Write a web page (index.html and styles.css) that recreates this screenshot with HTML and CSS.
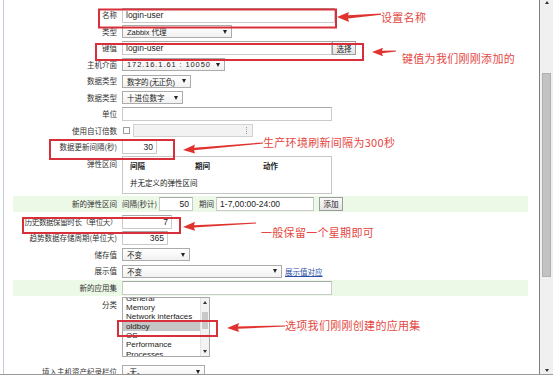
FILE: index.html
```html
<!DOCTYPE html>
<html lang="zh-CN">
<head>
    <meta charset="UTF-8">
    <title>监控项</title>
    <link rel="stylesheet" href="styles.css">
</head>
<body>
<div class="page">
    <div class="content">
        <div class="topbar"></div>
        <div class="form">
            <div class="row">
                <div class="label">名称</div>
                <div class="field"><div class="input w213 tall">login-user</div></div>
            </div>
            <div class="row">
                <div class="label">类型</div>
                <div class="field"><div class="select w110"><span>Zabbix 代理</span><i class="caret"></i></div></div>
            </div>
            <div class="row">
                <div class="label">键值</div>
                <div class="field"><div class="input w210">login-user</div><div class="btn">选择</div></div>
            </div>
            <div class="row">
                <div class="label">主机介面</div>
                <div class="field"><div class="select w103 spaced"><span>172.16.1.61 : 10050</span><i class="caret"></i></div></div>
            </div>
            <div class="row">
                <div class="label">数据类型</div>
                <div class="field"><div class="select w69 tight"><span>数字的 (无正负)</span><i class="caret"></i></div></div>
            </div>
            <div class="row">
                <div class="label">数据类型</div>
                <div class="field"><div class="select w61"><span>十进位数字</span><i class="caret"></i></div></div>
            </div>
            <div class="row">
                <div class="label">单位</div>
                <div class="field"><div class="input w210"></div></div>
            </div>
            <div class="row">
                <div class="label">使用自订倍数</div>
                <div class="field"><div class="checkbox"></div><div class="spinner"><i></i></div></div>
            </div>
            <div class="row">
                <div class="label">数据更新间隔(秒)</div>
                <div class="field"><div class="input num w35">30</div></div>
            </div>
            <div class="row tall-row">
                <div class="label">弹性区间</div>
                <div class="field">
                    <div class="intervals">
                        <div class="intervals-head"><span>间隔</span><span>期间</span><span>动作</span></div>
                        <div class="intervals-empty">并无定义的弹性区间</div>
                    </div>
                </div>
            </div>
            <div class="row band">
                <div class="label">新的弹性区间</div>
                <div class="field">
                    <span class="inline-text">间隔(秒计)</span>
                    <div class="input num w34 ml2">50</div>
                    <span class="inline-text ml6">期间</span>
                    <div class="input w98 ml2">1-7,00:00-24:00</div>
                    <div class="btn ml5">添加</div>
                </div>
            </div>
            <div class="row mt2">
                <div class="label narrow">历史数据保留时长（单位天）</div>
                <div class="field"><div class="input num w50">7</div></div>
            </div>
            <div class="row">
                <div class="label">趋势数据存储周期(单位天)</div>
                <div class="field"><div class="input num w46">365</div></div>
            </div>
            <div class="row">
                <div class="label">储存值</div>
                <div class="field"><div class="select w68"><span>不变</span><i class="caret"></i></div></div>
            </div>
            <div class="row">
                <div class="label">展示值</div>
                <div class="field"><div class="select w160"><span>不变</span><i class="caret"></i></div><a class="link" href="#">展示值对应</a></div>
            </div>
            <div class="row band">
                <div class="label">新的应用集</div>
                <div class="field"><div class="input w210"></div></div>
            </div>
            <div class="row list-row">
                <div class="label">分类</div>
                <div class="field">
                    <div class="listbox">
                        <div class="options">
                            <div class="option">General</div>
                            <div class="option">Memory</div>
                            <div class="option">Network interfaces</div>
                            <div class="option selected">oldboy</div>
                            <div class="option">OS</div>
                            <div class="option">Performance</div>
                            <div class="option">Processes</div>
                        </div>
                        <div class="list-scroll">
                            <i class="tri up"></i>
                            <div class="list-thumb"></div>
                            <i class="tri down"></i>
                        </div>
                    </div>
                </div>
            </div>
            <div class="row last-row">
                <div class="label">填入主机资产纪录栏位</div>
                <div class="field"><div class="select w83"><span>-无-</span><i class="caret"></i></div></div>
            </div>
        </div>

        <!-- annotations drawn on top of the screenshot -->
        <svg class="marks" width="539" height="374" viewBox="0 0 539 374">
            <g fill="none" stroke="#d8303a" stroke-width="2">
                <rect x="99" y="9.5" width="237" height="18"/>
                <rect x="96" y="44" width="267" height="16"/>
                <rect x="50" y="140" width="124" height="19"/>
                <rect x="23" y="218" width="157" height="15"/>
                <rect x="118" y="321" width="99" height="15"/>
            </g>
            <g fill="#e0332f">
                <polygon points="337,17 349,12 348,15.3 381,13.4 381,14.8 348,18.6 349,22"/>
                <polygon points="372,52 383,47.8 382,50.8 396,50.4 396,51.6 382,53.2 383,56.2"/>
                <polygon points="183,150 195,144.5 194,147.8 263,142.4 263,143.6 194,150.3 195,153.5"/>
                <polygon points="183,227 195,221.8 194,225.2 256,222.4 256,223.6 194,227.6 195,230.8"/>
                <polygon points="227,328 239,323.1 238,326.4 285,325.4 285,326.6 238,328.8 239,332.1"/>
            </g>
        </svg>
        <span class="note n1">设置名称</span>
        <span class="note n2">键值为我们刚刚添加的</span>
        <span class="note n3">生产环境刷新间隔为300秒</span>
        <span class="note n4">一般保留一个星期即可</span>
        <span class="note n5">选项我们刚刚创建的应用集</span>
    </div>
    <div class="scrollbar">
        <div class="sb-arrow top"><i class="tri up"></i></div>
        <div class="sb-track"><div class="sb-thumb"></div></div>
        <div class="sb-arrow bottom"><i class="tri down"></i></div>
    </div>
</div>
</body>
</html>
```

FILE: styles.css
```css
body {
    margin: 0;
    background: #fff;
    color: #333;
    font-family: "Noto Sans CJK SC", sans-serif;
}
.page {
    display: flex;
    width: 553px;
    height: 374px;
    border-bottom: 1px solid #9a9a9a;
    overflow: hidden;
}
.content {
    position: relative;
    width: 539px;
    border-right: 1px solid #808080;
    display: flex;
    flex-direction: column;
}
.topbar {
    height: 3px;
    background: #8aa1bb;
}
.form {
    flex: 1;
    margin-left: 3px;
    border-left: 1px solid #c2ccd6;
    padding-top: 7px;
}
.row {
    display: grid;
    grid-template-columns: 113px 1fr;
    column-gap: 5px;
    height: 16.5px;
    align-items: center;
}
.row.band {
    height: 16px;
    margin: 0 11px 0 9px;
    grid-template-columns: 104px 1fr;
    background: #edf9e7;
}
.row.tall-row {
    height: 40px;
    align-items: start;
}
.row.list-row {
    height: 63px;
    align-items: start;
    padding-top: 1px;
    box-sizing: border-box;
}
.row.last-row {
    height: 16px;
    margin-top: 5px;
}
.mt2 { margin-top: 2px; }
.ml2 { margin-left: 2px; }
.ml5 { margin-left: 5px; }
.ml6 { margin-left: 6px; }
.label {
    text-align: right;
    font-size: 7.5px;
    line-height: 16px;
    color: #333;
    white-space: nowrap;
}
.label.narrow { letter-spacing: -0.4px; }
.field {
    display: flex;
    align-items: center;
    min-width: 0;
}
.input {
    box-sizing: border-box;
    height: 14px;
    border: 1px solid #cacaca;
    border-top-color: #a8a8a8;
    background: #fff;
    padding: 0 3px;
    display: flex;
    align-items: center;
    font: 8.5px "Liberation Sans", "Noto Sans CJK SC", sans-serif;
    color: #222;
    white-space: nowrap;
}
.input.tall { height: 15px; }
.input.num { justify-content: flex-end; }
.w34 { width: 34px; }
.w35 { width: 35px; }
.w46 { width: 46px; }
.w50 { width: 50px; }
.w61 { width: 61px; }
.w68 { width: 68px; }
.w69 { width: 69px; }
.w83 { width: 83px; }
.w98 { width: 98px; }
.w103 { width: 103px; }
.w110 { width: 110px; }
.w160 { width: 160px; }
.w210 { width: 210px; }
.w213 { width: 213px; }
.select {
    box-sizing: border-box;
    height: 13px;
    border: 1px solid #ababab;
    background: linear-gradient(#fff, #f1f1f1);
    padding: 0 4px;
    display: flex;
    align-items: center;
    justify-content: space-between;
    font: 7.5px "Liberation Sans", "Noto Sans CJK SC", sans-serif;
    color: #222;
    white-space: nowrap;
}
.select.spaced span { letter-spacing: 0.9px; }
.select.tight span { letter-spacing: -0.5px; }
.caret {
    flex: none;
    width: 0;
    height: 0;
    border-left: 2.5px solid transparent;
    border-right: 2.5px solid transparent;
    border-top: 4px solid #222;
}
.btn {
    box-sizing: border-box;
    height: 14px;
    width: 24px;
    border: 1px solid #9c9c9c;
    background: linear-gradient(#fbfbfb, #e4e4e4);
    display: flex;
    align-items: center;
    justify-content: center;
    font-size: 7.5px;
    color: #222;
}
.checkbox {
    box-sizing: border-box;
    width: 7px;
    height: 7px;
    margin-left: 1px;
    border: 1px solid #9c9c9c;
    background: #fff;
}
.spinner {
    box-sizing: border-box;
    width: 120px;
    height: 13px;
    margin-left: 3px;
    border: 1px solid #d2d2d2;
    background: #f2f2f2;
    display: flex;
    align-items: center;
    justify-content: flex-end;
    padding-right: 4px;
}
.spinner i {
    width: 1px;
    height: 7px;
    border-left: 1px dotted #999;
}
.intervals {
    box-sizing: border-box;
    width: 210px;
    height: 38px;
    border: 1px solid #c6c6c6;
    padding: 3px 0 0 7px;
    font-size: 7.5px;
    color: #222;
}
.intervals-head {
    display: grid;
    grid-template-columns: 65px 68px auto;
    font-weight: bold;
    line-height: 11px;
}
.intervals-empty {
    margin-top: 6px;
    line-height: 11px;
}
.inline-text {
    font-size: 7.5px;
    color: #333;
    white-space: nowrap;
}
.link {
    margin-left: 3px;
    font-size: 7.5px;
    color: #2a4ea6;
    text-decoration: underline;
}
.listbox {
    box-sizing: border-box;
    width: 88px;
    height: 60px;
    border: 1px solid #a9a9a9;
    background: #fff;
    overflow: hidden;
    display: flex;
}
.options {
    flex: 1;
    margin-top: -3.7px;
    font: 8px "Liberation Sans", sans-serif;
    line-height: 9.3px;
    color: #222;
}
.option {
    padding-left: 3px;
    white-space: nowrap;
}
.option.selected {
    background: #c6c6c6;
}
.list-scroll {
    width: 9px;
    background: #f3f3f3;
    border-left: 1px solid #e3e3e3;
    display: flex;
    flex-direction: column;
    align-items: center;
    justify-content: space-between;
    padding: 3px 0;
    box-sizing: border-box;
}
.list-thumb {
    width: 6px;
    height: 17px;
    background: #c9c9c9;
    margin-top: 8px;
    margin-bottom: auto;
}
.tri {
    width: 0;
    height: 0;
    border-left: 2.5px solid transparent;
    border-right: 2.5px solid transparent;
}
.tri.up { border-bottom: 3px solid #333; }
.tri.down { border-top: 3px solid #333; }
.marks {
    position: absolute;
    left: 0;
    top: 0;
    pointer-events: none;
}
.note {
    position: absolute;
    font-size: 11px;
    line-height: 14px;
    letter-spacing: 0.3px;
    color: #e4473f;
    white-space: nowrap;
}
.n1 { left: 381px; top: 10px; }
.n2 { left: 402px; top: 51px; }
.n3 { left: 263px; top: 135px; }
.n4 { left: 261px; top: 225px; }
.n5 { left: 285px; top: 318px; }
.scrollbar {
    width: 13px;
    background: #f0f0f0;
    display: flex;
    flex-direction: column;
}
.sb-arrow {
    height: 8px;
    display: flex;
    justify-content: center;
}
.sb-arrow.top { align-items: flex-start; padding-top: 1px; }
.sb-arrow.bottom { align-items: center; }
.sb-track {
    flex: 1;
}
.sb-thumb {
    margin: 64px 2px 0;
    height: 204px;
    background: #c3c3c3;
    border: 1px solid #b0b0b0;
    box-sizing: border-box;
}
```
